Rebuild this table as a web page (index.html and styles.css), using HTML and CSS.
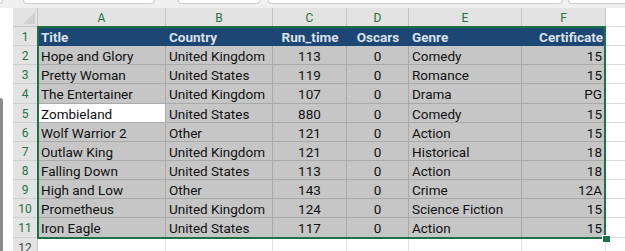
FILE: index.html
```html
<!DOCTYPE html>
<html>
<head>
<meta charset="utf-8">
<link rel="stylesheet" href="styles.css">
</head>
<body>
<div class="top">
  <div class="box b0"></div>
  <div class="box b1"></div>
  <div class="box b2"></div>
  <div class="box b3"></div>
  <div class="box b4"></div>
</div>
<div class="main">
  <div class="left"><div class="bar"></div></div>
  <div class="sheet">
    <div class="corner"></div>
    <div class="ch">A</div><div class="ch">B</div><div class="ch">C</div><div class="ch">D</div><div class="ch">E</div><div class="ch">F</div><div class="chg"></div>

    <div class="rh">1</div>
    <div class="hd">Title</div><div class="hd">Country</div><div class="hd ctr">Run_time</div><div class="hd ctr">Oscars</div><div class="hd">Genre</div><div class="hd rt">Certificate</div><div class="g"></div>

    <div class="rh">2</div>
    <div class="c">Hope and Glory</div><div class="c">United Kingdom</div><div class="c ctr">113</div><div class="c ctr">0</div><div class="c">Comedy</div><div class="c rt">15</div><div class="g"></div>

    <div class="rh">3</div>
    <div class="c">Pretty Woman</div><div class="c">United States</div><div class="c ctr">119</div><div class="c ctr">0</div><div class="c">Romance</div><div class="c rt">15</div><div class="g"></div>

    <div class="rh">4</div>
    <div class="c">The Entertainer</div><div class="c">United Kingdom</div><div class="c ctr">107</div><div class="c ctr">0</div><div class="c">Drama</div><div class="c rt">PG</div><div class="g"></div>

    <div class="rh">5</div>
    <div class="c act">Zombieland</div><div class="c">United States</div><div class="c ctr">880</div><div class="c ctr">0</div><div class="c">Comedy</div><div class="c rt">15</div><div class="g"></div>

    <div class="rh">6</div>
    <div class="c">Wolf Warrior 2</div><div class="c">Other</div><div class="c ctr">121</div><div class="c ctr">0</div><div class="c">Action</div><div class="c rt">15</div><div class="g"></div>

    <div class="rh">7</div>
    <div class="c">Outlaw King</div><div class="c">United Kingdom</div><div class="c ctr">121</div><div class="c ctr">0</div><div class="c">Historical</div><div class="c rt">18</div><div class="g"></div>

    <div class="rh">8</div>
    <div class="c">Falling Down</div><div class="c">United States</div><div class="c ctr">113</div><div class="c ctr">0</div><div class="c">Action</div><div class="c rt">18</div><div class="g"></div>

    <div class="rh">9</div>
    <div class="c">High and Low</div><div class="c">Other</div><div class="c ctr">143</div><div class="c ctr">0</div><div class="c">Crime</div><div class="c rt">12A</div><div class="g"></div>

    <div class="rh">10</div>
    <div class="c">Prometheus</div><div class="c">United Kingdom</div><div class="c ctr">124</div><div class="c ctr">0</div><div class="c">Science Fiction</div><div class="c rt">15</div><div class="g"></div>

    <div class="rh">11</div>
    <div class="c">Iron Eagle</div><div class="c">United States</div><div class="c ctr">117</div><div class="c ctr">0</div><div class="c">Action</div><div class="c rt">15</div><div class="g"></div>

    <div class="rh un">12</div>
    <div class="e"></div><div class="e"></div><div class="e"></div><div class="e"></div><div class="e"></div><div class="e"></div><div class="g"></div>

    <div class="selection"><div class="handle"></div></div>
  </div>
</div>
</body>
</html>
```
FILE: styles.css
```css
* { box-sizing: border-box; margin: 0; padding: 0; }
body {
  width: 625px;
  height: 251px;
  overflow: hidden;
  background: #fff;
  font-family: Roboto, "Liberation Sans", sans-serif;
}
.top {
  height: 8px;
  background: #efefef;
  display: flex;
  overflow: hidden;
}
.box {
  height: 4px;
  background: #fff;
  border: 1px solid #cdcdcd;
  border-top: 0;
  border-radius: 0 0 4px 4px;
}
.b0 { width: 3px; border-left: 0; border-radius: 0 0 3px 0; }
.b1 { margin-left: 20px; width: 132px; }
.b2 { margin-left: 23px; width: 82px; }
.b3 { margin-left: 8px; width: 295px; }
.b4 { margin-left: 5px; flex: 1; border-right: 0; border-radius: 0 0 0 4px; }

.main { display: flex; height: 243px; overflow: hidden; }
.left { width: 13px; display: flex; flex-direction: column; }
.bar {
  margin-top: 90px;
  flex: 1;
  width: 3px;
  background: #8a8a8a;
  border-radius: 0 3px 0 0;
}
.sheet {
  flex: 1;
  display: grid;
  grid-template-columns: 25px 128px 107px 74px 62px 113px 84px 1fr;
  grid-template-rows: 19px repeat(12, 19.15px);
  position: relative;
}
.corner {
  background: #e3e3e3;
  border-right: 1px solid #c4c4c4;
  border-bottom: 1px solid #c4c4c4;
  position: relative;
}
.corner::after {
  content: "";
  position: absolute;
  right: 2px;
  bottom: 2px;
  width: 12px;
  height: 12px;
  background: #d0d0d0;
  clip-path: polygon(100% 0, 100% 100%, 0 100%);
}
.ch {
  background: #e3e3e3;
  border-right: 1px solid #c4c4c4;
  border-bottom: 1px solid #c4c4c4;
  color: #1f7244;
  font-size: 12px;
  text-align: center;
  padding-top: 2px;
  line-height: 17px;
}
.chg { background: #fff; border-bottom: 1px solid #dcdcdc; }
.rh {
  background: #e3e3e3;
  border-right: 1px solid #c4c4c4;
  border-bottom: 1px solid #cfcfcf;
  color: #1f7244;
  font-size: 12px;
  text-align: center;
  padding-top: 2px;
  line-height: 17px;
  overflow: hidden;
}
.rh.un { color: #444; }
.hd, .c, .e {
  font-size: 13.5px;
  padding: 2px 3px 0 3px;
  line-height: 17px;
  white-space: nowrap;
  overflow: hidden;
}
.hd {
  background: #1c4673;
  color: #dbe1e8;
  font-weight: bold;
}
.c {
  background: #c6c6c6;
  color: #111;
  border-right: 1px solid #a9a9a9;
  border-bottom: 1px solid #a9a9a9;
}
.c.act { background: #fff; }
.e {
  border-right: 1px solid #e1e1e1;
  border-bottom: 1px solid #e1e1e1;
}
.g { background: #fff; border-bottom: 1px solid #dadada; }
.ctr { text-align: center; }
.rt { text-align: right; }
.selection {
  position: absolute;
  grid-column: 2 / 8;
  grid-row: 2 / 13;
  top: -1px;
  left: -1px;
  right: 0;
  bottom: -1px;
  border: 2px solid #1e7145;
  pointer-events: none;
}
.handle {
  position: absolute;
  right: -6px;
  bottom: -5px;
  width: 8px;
  height: 7px;
  background: #1e7145;
  border-left: 1px solid #fff;
  border-top: 1px solid #fff;
}
```
